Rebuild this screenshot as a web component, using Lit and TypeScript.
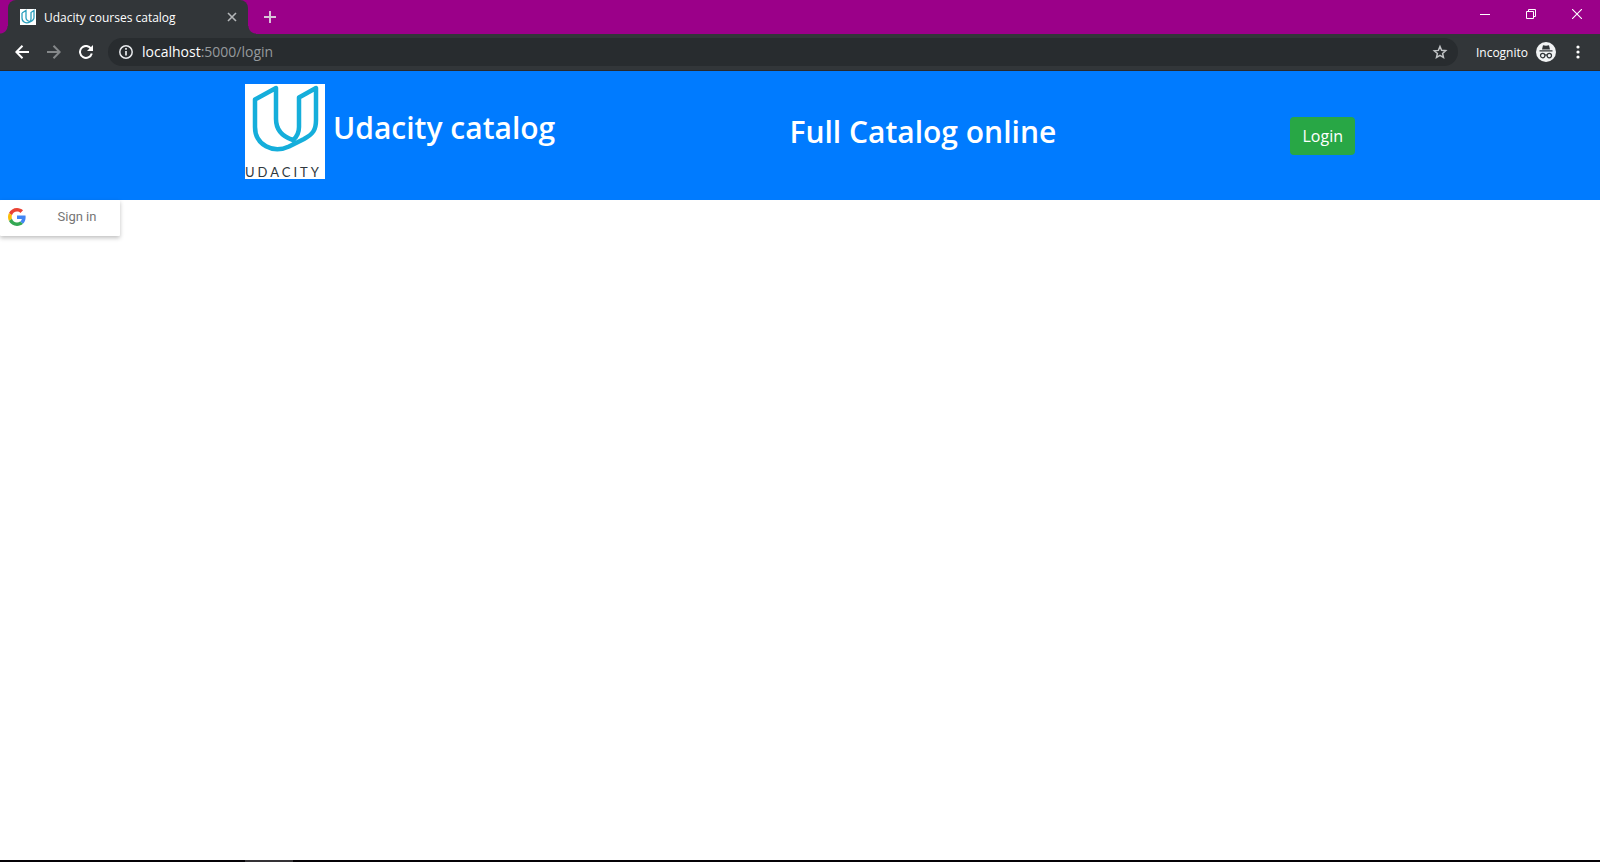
import { LitElement, html, css } from "lit";
import { customElement } from "lit/decorators.js";

@customElement("browser-chrome")
class BrowserChrome extends LitElement {
  static styles = css`
    :host {
      display: block;
      font-family: "Open Sans", "Noto Sans", sans-serif;
      color: #fff;
    }
    button {
      appearance: none;
      border: 0;
      padding: 0;
      background: none;
      color: inherit;
      font: inherit;
      display: flex;
      align-items: center;
      justify-content: center;
    }
    svg {
      display: block;
    }
    .strip {
      display: flex;
      height: 34px;
      background: #9b0089;
    }
    .flare {
      width: 8px;
      align-self: flex-end;
      height: 8px;
      background: radial-gradient(circle at 0 0, transparent 7px, #323639 8px);
    }
    .flare.right {
      background: radial-gradient(circle at 100% 0, transparent 7px, #323639 8px);
    }
    .tab {
      display: flex;
      align-items: center;
      box-sizing: border-box;
      width: 240px;
      padding: 0 10px 0 12px;
      gap: 8px;
      background: #323639;
      border-radius: 8px 8px 0 0;
      font-size: 12px;
    }
    .tab-title {
      flex: 1;
      white-space: nowrap;
    }
    .new-tab {
      width: 28px;
    }
    .window {
      display: flex;
      margin-left: auto;
    }
    .window button {
      width: 46px;
      height: 28px;
    }
    .toolbar {
      display: flex;
      align-items: center;
      box-sizing: border-box;
      height: 37px;
      padding: 0 12px 0 6px;
      background: #323639;
      border-bottom: 1px solid #28292c;
    }
    .nav {
      width: 32px;
      height: 32px;
    }
    .dim {
      color: #85888a;
    }
    .address {
      display: flex;
      align-items: center;
      flex: 1;
      height: 28px;
      margin: 0 18px 0 6px;
      padding: 0 9px 0 9px;
      border-radius: 14px;
      background: #282c2f;
      gap: 7px;
    }
    .url {
      flex: 1;
      font-size: 14px;
      line-height: 18px;
      color: #fff;
      text-decoration: none;
    }
    .rest {
      color: #969a9d;
    }
    .profile {
      font-size: 12px;
      gap: 8px;
    }
    .menu {
      width: 20px;
      height: 28px;
      margin-left: 12px;
    }
  `;

  render() {
    return html`
      <div class="strip">
        <span class="flare"></span>
        <div class="tab">
          <svg width="16" height="16" viewBox="0 0 16 16" fill="none">
            <path fill="#fff" d="M0 0h16v16H0z" />
            <path stroke="#2b9fbd" stroke-width="1.3" d="M2 4l4-2.5v7c0 2 1.500 3.500 4 4.200M10 12.700c.7-.8 1-1.500 1-3V3.500l3-2v7c0 2-1 3-4 4.500-4 2-8 0-8-4V4" />
          </svg>
          <span class="tab-title">Udacity courses catalog</span>
          <button aria-label="Close tab">
            <svg width="12" height="12" viewBox="0 0 12 12" stroke="#b4b7b9" stroke-width="1.600">
              <path d="M2 2l8 8M10 2l-8 8" />
            </svg>
          </button>
        </div>
        <span class="flare right"></span>
        <button class="new-tab" aria-label="New tab">
          <svg width="12" height="12" viewBox="0 0 12 12" stroke="#d9c4d8" stroke-width="2">
            <path d="M6 0v12M0 6h12" />
          </svg>
        </button>
        <div class="window">
          <button aria-label="Minimize">
            <svg width="10" height="10" viewBox="0 0 10 10"><path fill="#fff" d="M0 5h10v1H0z" /></svg>
          </button>
          <button aria-label="Restore">
            <svg width="10" height="10" viewBox="0 0 10 10" fill="none" stroke="#fff">
              <path d="M.5 2.500h7v7h-7zM2.500 2.500v-2h7v7h-2" />
            </svg>
          </button>
          <button aria-label="Close">
            <svg width="10" height="10" viewBox="0 0 10 10" stroke="#fff" stroke-width="1.100">
              <path d="M0 0l10 10M10 0L0 10" />
            </svg>
          </button>
        </div>
      </div>
      <div class="toolbar">
        <button class="nav" aria-label="Back">
          <svg width="14" height="14" viewBox="0 0 14 14" fill="none" stroke="#fff" stroke-width="2">
            <path d="M14 7H1.500M7.500 .7L1.300 7l6.200 6.300" />
          </svg>
        </button>
        <button class="nav dim" aria-label="Forward">
          <svg width="14" height="14" viewBox="0 0 14 14" fill="none" stroke="currentColor" stroke-width="2">
            <path d="M0 7h12.500M6.500 .7L12.700 7l-6.200 6.300" />
          </svg>
        </button>
        <button class="nav" aria-label="Reload">
          <svg width="14" height="14" viewBox="0 0 14 14" fill="none">
            <path stroke="#fff" stroke-width="2" d="M12 3.600A6 6 0 1 0 12.800 8.500" />
            <path fill="#fff" d="M14 0v6H8z" />
          </svg>
        </button>
        <div class="address">
          <svg width="18" height="18" viewBox="0 0 18 18" fill="none" stroke="#e8eaed">
            <circle cx="9" cy="9" r="6.200" stroke-width="1.500" />
            <path stroke-width="1.700" d="M9 8v4.500M9 5v1.700" />
          </svg>
          <a class="url" href="#login">localhost<span class="rest">:5000/login</span></a>
          <button aria-label="Bookmark this tab">
            <svg width="18" height="18" viewBox="0 0 18 18" fill="none" stroke="#c0c3c5" stroke-width="1.500">
              <path d="M9 3.500l1.600 3.800 4.100.4-3.100 2.700.9 4L9 12.400l-3.500 2.100.9-4-3.100-2.700 4.100-.4z" />
            </svg>
          </button>
        </div>
        <button class="profile">
          Incognito
          <svg width="20" height="20" viewBox="0 0 20 20">
            <circle cx="10" cy="10" r="10" fill="#f1f3f4" />
            <path fill="#323639" d="M7 3.200l3 .6 3-.6 1 4.300H6zM3.500 8.200h13v1.300h-13z" />
            <g fill="none" stroke="#323639" stroke-width="1.200">
              <circle cx="6.700" cy="13.600" r="2.200" />
              <circle cx="13.300" cy="13.600" r="2.200" />
              <path d="M8.800 13.300q1.200-.7 2.400 0" />
            </g>
          </svg>
        </button>
        <button class="menu" aria-label="Menu">
          <svg width="4" height="14" viewBox="0 0 4 14" fill="#fff">
            <circle cx="2" cy="2" r="1.600" />
            <circle cx="2" cy="7" r="1.600" />
            <circle cx="2" cy="12" r="1.600" />
          </svg>
        </button>
      </div>
    `;
  }
}

@customElement("catalog-header")
class CatalogHeader extends LitElement {
  static styles = css`
    :host {
      display: block;
      background: #007bff;
      color: #fff;
      font-family: "Open Sans", "Noto Sans", sans-serif;
    }
    .container {
      display: flex;
      align-items: center;
      justify-content: space-between;
      box-sizing: border-box;
      max-width: 1140px;
      margin: 0 auto;
      padding: 13px 15px;
    }
    .brand {
      display: flex;
      align-items: center;
      gap: 8px;
      margin-bottom: 8px;
    }
    .logo {
      display: block;
      background: #fff;
    }
    .wordmark {
      font-family: Lato, sans-serif;
      font-size: 13px;
      letter-spacing: 3px;
      fill: #2f3840;
    }
    h1,
    h2 {
      margin: 0 0 8px;
      font-size: 30px;
      font-weight: 600;
      line-height: 38px;
    }
    .login {
      border: 0;
      border-radius: 4px;
      height: 38px;
      padding: 0 12px;
      background: #28a745;
      color: #fff;
      font: 16px/24px "Open Sans", "Noto Sans", sans-serif;
    }
  `;

  render() {
    return html`
      <header class="container">
        <div class="brand">
          <svg class="logo" width="80" height="95" viewBox="0 0 80 95" role="img" aria-label="Udacity">
            <path
              fill="none"
              stroke="#15aedb"
              stroke-width="4.500"
              stroke-linejoin="round"
              d="M10 15.500L31 4V35C31 45 37 52.500 48 56C52.500 52.500 54 49 54 43V13.500L71 4V36C71 46 68 50 59 55L44 62.500C28 70 10 61 10 43Z"
            />
            <text class="wordmark" x="0" y="93">UDACITY</text>
          </svg>
          <h1>Udacity catalog</h1>
        </div>
        <h2>Full Catalog online</h2>
        <button class="login">Login</button>
      </header>
    `;
  }
}

@customElement("google-sign-in")
class GoogleSignIn extends LitElement {
  static styles = css`
    :host {
      display: flex;
    }
    .sign-in {
      display: flex;
      align-items: center;
      width: 120px;
      height: 36px;
      padding: 0 0 2px 8px;
      border: 0;
      border-radius: 1px;
      background: #fff;
      box-shadow: 0 2px 4px 0 rgba(0, 0, 0, 0.25);
      color: #757575;
      font: 400 13px/34px Roboto, sans-serif;
    }
    .label {
      flex: 1;
      padding-left: 8px;
    }
  `;

  render() {
    return html`
      <button class="sign-in">
        <svg width="18" height="18" viewBox="0 0 48 48">
          <path fill="#EA4335" d="M24 9.500c3.540 0 6.710 1.220 9.210 3.600l6.850-6.850C35.900 2.380 30.470 0 24 0 14.620 0 6.510 5.380 2.560 13.220l7.980 6.190C12.430 13.720 17.740 9.500 24 9.500z" />
          <path fill="#4285F4" d="M46.980 24.550c0-1.570-.15-3.090-.38-4.550H24v9.020h12.940c-.58 2.960-2.260 5.480-4.780 7.180l7.730 6c4.510-4.180 7.090-10.360 7.090-17.650z" />
          <path fill="#FBBC05" d="M10.530 28.590c-.48-1.450-.76-2.990-.76-4.590s.27-3.140.76-4.590l-7.980-6.190C.92 16.460 0 20.120 0 24c0 3.880.92 7.540 2.560 10.780l7.970-6.190z" />
          <path fill="#34A853" d="M24 48c6.480 0 11.930-2.130 15.890-5.810l-7.730-6c-2.150 1.450-4.920 2.300-8.160 2.300-6.260 0-11.570-4.220-13.470-9.910l-7.980 6.190C6.510 42.620 14.620 48 24 48z" />
        </svg>
        <span class="label">Sign in</span>
      </button>
    `;
  }
}

@customElement("app-root")
class AppRoot extends LitElement {
  static styles = css`
    :host {
      display: flex;
      flex-direction: column;
      min-height: 100vh;
      background: #fff;
    }
    main {
      flex: 1;
    }
    .taskbar {
      height: 2px;
      padding-left: 245px;
      background: #050306;
    }
    .task {
      width: 48px;
      height: 2px;
      background: #353336;
    }
  `;

  render() {
    return html`
      <browser-chrome></browser-chrome>
      <catalog-header></catalog-header>
      <main><google-sign-in></google-sign-in></main>
      <div class="taskbar"><div class="task"></div></div>
    `;
  }
}
